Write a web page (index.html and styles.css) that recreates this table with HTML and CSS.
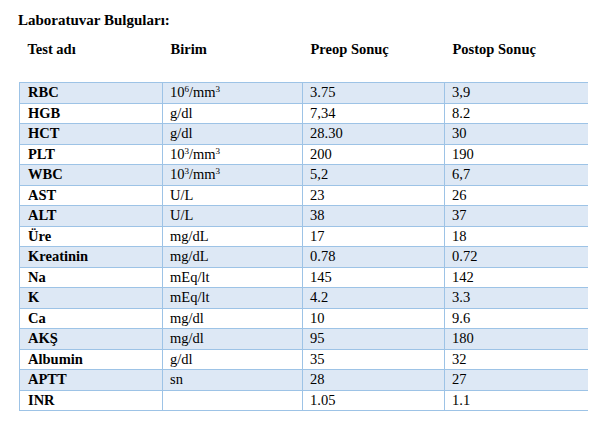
FILE: index.html
```html
<!DOCTYPE html>
<html lang="tr">
<head>
<meta charset="utf-8">
<title>Laboratuvar Bulguları</title>
<link rel="stylesheet" href="styles.css">
</head>
<body>
<div class="page">
  <h1 class="title">Laboratuvar Bulguları:</h1>
  <table class="lab">
    <colgroup>
      <col class="c1"><col class="c2"><col class="c3"><col class="c4">
    </colgroup>
    <thead>
      <tr class="head">
        <th>Test adı</th><th>Birim</th><th>Preop Sonuç</th><th>Postop Sonuç</th>
      </tr>
    </thead>
    <tbody>
      <tr class="alt"><td class="name">RBC</td><td>10<sup>6</sup>/mm<sup>3</sup></td><td>3.75</td><td>3,9</td></tr>
      <tr><td class="name">HGB</td><td>g/dl</td><td>7,34</td><td>8.2</td></tr>
      <tr class="alt"><td class="name">HCT</td><td>g/dl</td><td>28.30</td><td>30</td></tr>
      <tr><td class="name">PLT</td><td>10<sup>3</sup>/mm<sup>3</sup></td><td>200</td><td>190</td></tr>
      <tr class="alt"><td class="name">WBC</td><td>10<sup>3</sup>/mm<sup>3</sup></td><td>5,2</td><td>6,7</td></tr>
      <tr><td class="name">AST</td><td>U/L</td><td>23</td><td>26</td></tr>
      <tr class="alt"><td class="name">ALT</td><td>U/L</td><td>38</td><td>37</td></tr>
      <tr><td class="name">Üre</td><td>mg/dL</td><td>17</td><td>18</td></tr>
      <tr class="alt"><td class="name">Kreatinin</td><td>mg/dL</td><td>0.78</td><td>0.72</td></tr>
      <tr><td class="name">Na</td><td>mEq/lt</td><td>145</td><td>142</td></tr>
      <tr class="alt"><td class="name">K</td><td>mEq/lt</td><td>4.2</td><td>3.3</td></tr>
      <tr><td class="name">Ca</td><td>mg/dl</td><td>10</td><td>9.6</td></tr>
      <tr class="alt"><td class="name">AKŞ</td><td>mg/dl</td><td>95</td><td>180</td></tr>
      <tr><td class="name">Albumin</td><td>g/dl</td><td>35</td><td>32</td></tr>
      <tr class="alt"><td class="name">APTT</td><td>sn</td><td>28</td><td>27</td></tr>
      <tr class="last"><td class="name">INR</td><td></td><td>1.05</td><td>1.1</td></tr>
    </tbody>
  </table>
</div>
</body>
</html>
```
FILE: styles.css
```css
html, body {
  margin: 0;
  padding: 0;
  background: #ffffff;
}

body {
  font-family: "Liberation Serif", "Times New Roman", serif;
  font-size: 14.5px;
  color: #000000;
}

.page {
  padding: 12px 0 0 18px;
}

.title {
  margin: 0;
  font-size: 15px;
  font-weight: bold;
  line-height: 17px;
}

.lab {
  border-collapse: collapse;
  table-layout: fixed;
  width: 568px;
  margin: 12px 0 0 1px;
}

.c1 { width: 143px; }
.c2 { width: 140px; }
.c3 { width: 142px; }
.c4 { width: 143px; }

.lab th {
  text-align: left;
  font-weight: bold;
  line-height: 17px;
  padding: 0 0 24px 8px;
  vertical-align: top;
}

.lab td {
  line-height: 17px;
  padding: 1px 4px 1.5px 7px;
  border-top: 1px solid #9dc3e6;
  border-left: 1px solid #9dc3e6;
  vertical-align: top;
  white-space: nowrap;
}

.lab td.name {
  font-weight: bold;
  padding-left: 8px;
}

.lab tr.alt td {
  background: #dde8f5;
}

.lab tr.last td {
  border-bottom: 1px solid #9dc3e6;
}

.lab sup {
  font-size: 9px;
  line-height: 0;
  vertical-align: 5px;
}
```
